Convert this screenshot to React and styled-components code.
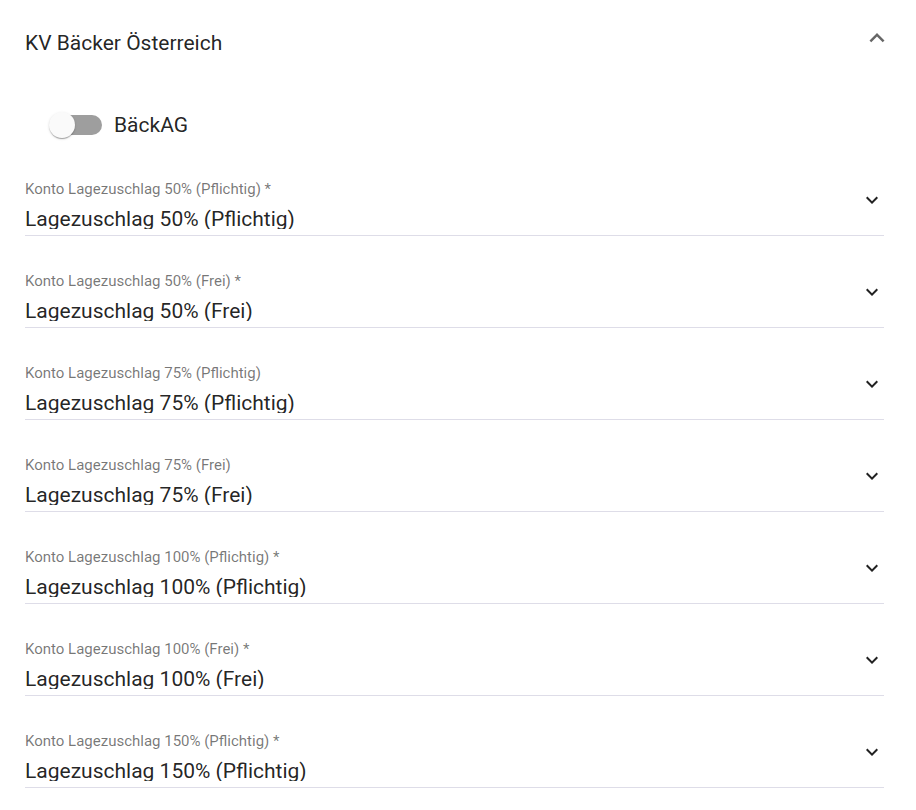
import React from "react";
import styled, { createGlobalStyle } from "styled-components";

const GlobalStyle = createGlobalStyle`
  html, body { margin: 0; padding: 0; background: #fff; }
  body { font-family: Roboto, "Noto Sans", Arial, sans-serif; color: rgba(0,0,0,0.87); }
`;

const Panel = styled.section`
  padding: 31px 32px 0 25px;
  width: 916px;
  box-sizing: border-box;
`;

const Header = styled.header`
  display: flex;
  align-items: flex-start;
  justify-content: space-between;
`;

const Title = styled.h2`
  margin: 0;
  font-size: 21px;
  line-height: 24px;
  font-weight: 400;
  color: rgba(0,0,0,0.87);
`;

const HeaderIcon = styled.svg`
  width: 30px;
  height: 30px;
  margin-top: -8px;
  margin-right: -8px;
  fill: rgba(0,0,0,0.6);
`;

const ToggleRow = styled.label`
  display: flex;
  align-items: center;
  gap: 12px;
  margin-top: 55px;
  height: 30px;
`;

const Switch = styled.span`
  position: relative;
  display: block;
  width: 53px;
  height: 30px;
  margin-left: 24px;
`;

const Track = styled.span`
  display: block;
  margin: 5px 0 0 9px;
  width: 44px;
  height: 20px;
  border-radius: 10px;
  background: #9e9e9e;
`;

const Thumb = styled.span`
  position: absolute;
  left: 0;
  top: 2px;
  width: 26px;
  height: 26px;
  border-radius: 50%;
  background: #fafafa;
  box-shadow: 0 2px 1px -1px rgba(0,0,0,0.2), 0 1px 1px 0 rgba(0,0,0,0.14), 0 1px 3px 0 rgba(0,0,0,0.12);
`;

const ToggleText = styled.span`
  font-size: 21px;
  line-height: 24px;
  color: rgba(0,0,0,0.87);
`;

const Fields = styled.div`
  display: flex;
  flex-direction: column;
  gap: 35px;
  margin-top: 39px;
`;

const Field = styled.div`
  display: flex;
  align-items: flex-start;
  padding-bottom: 6px;
  border-bottom: 1px solid #dedde8;
`;

const FieldBody = styled.div`
  flex: 1;
  min-width: 0;
`;

const Label = styled.div`
  font-size: 15px;
  line-height: 20px;
  color: rgba(0,0,0,0.54);
`;

const Value = styled.div`
  margin-top: 8px;
  height: 22px;
  overflow: hidden;
  font-size: 21px;
  line-height: 24px;
  color: rgba(0,0,0,0.87);
`;

const Chevron = styled.svg`
  width: 24px;
  height: 24px;
  margin-top: 9px;
  fill: rgba(0,0,0,0.87);
  flex: none;
`;

const fields = [
  ["Konto Lagezuschlag 50% (Pflichtig) *", "Lagezuschlag 50% (Pflichtig)"],
  ["Konto Lagezuschlag 50% (Frei) *", "Lagezuschlag 50% (Frei)"],
  ["Konto Lagezuschlag 75% (Pflichtig)", "Lagezuschlag 75% (Pflichtig)"],
  ["Konto Lagezuschlag 75% (Frei)", "Lagezuschlag 75% (Frei)"],
  ["Konto Lagezuschlag 100% (Pflichtig) *", "Lagezuschlag 100% (Pflichtig)"],
  ["Konto Lagezuschlag 100% (Frei) *", "Lagezuschlag 100% (Frei)"],
  ["Konto Lagezuschlag 150% (Pflichtig) *", "Lagezuschlag 150% (Pflichtig)"],
];

export default function App() {
  return (
    <>
      <GlobalStyle />
      <Panel>
        <Header>
          <Title>KV Bäcker Österreich</Title>
          <HeaderIcon viewBox="0 0 24 24">
            <path d="M12 8l-6 6 1.41 1.41L12 10.83l4.59 4.58L18 14z" />
          </HeaderIcon>
        </Header>
        <ToggleRow>
          <Switch>
            <Track />
            <Thumb />
          </Switch>
          <ToggleText>BäckAG</ToggleText>
        </ToggleRow>
        <Fields>
          {fields.map(([label, value]) => (
            <Field key={label}>
              <FieldBody>
                <Label>{label}</Label>
                <Value>{value}</Value>
              </FieldBody>
              <Chevron viewBox="0 0 24 24">
                <path d="M16.59 8.59L12 13.17 7.41 8.59 6 10l6 6 6-6z" />
              </Chevron>
            </Field>
          ))}
        </Fields>
      </Panel>
    </>
  );
}
